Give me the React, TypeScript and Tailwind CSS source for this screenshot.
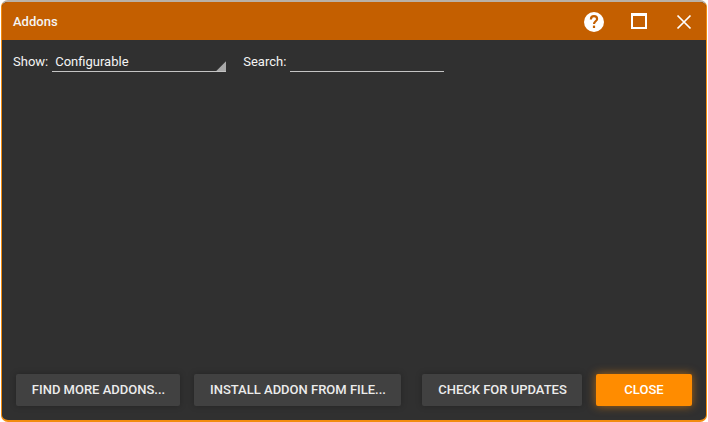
import React from "react";

function FooterButton({ label, width }: { label: string; width: string }) {
  return (
    <button
      className={`h-8 rounded-[2px] bg-[#414141] pl-px text-[13px] font-medium text-[#ececec] shadow-[0_0_6px_rgba(0,0,0,0.25)] ${width}`}
    >
      {label}
    </button>
  );
}

export default function App() {
  return (
    <div className="h-[422px] w-[708px] bg-white px-px font-['Roboto',sans-serif]">
      <div className="flex h-full w-full flex-col overflow-hidden rounded-[7px] border border-b-2 border-t-2 border-[#f28c0f] border-t-[#b9b0a6] bg-[#303030]">
        {/* Title bar */}
        <div className="flex h-[38px] shrink-0 items-center bg-[#c45f00] pl-[11px] text-white">
          <span className="mt-px text-[13px] font-medium text-[#f4f4f4]">Addons</span>
          <div className="ml-auto flex items-center">
            <svg width="22" height="22" viewBox="0 0 22 22" className="mr-[26px] mt-[2px]">
              <circle cx="11" cy="11" r="10" fill="#fff" />
              <path
                d="M7.9 8.4c0-2 1.2-3.2 3.1-3.2s3.1 1.1 3.1 2.7c0 2.3-3.1 2.4-3.1 5"
                fill="none"
                stroke="#c45f00"
                strokeWidth="2.2"
              />
              <rect x="9.9" y="14.6" width="2.2" height="2.4" fill="#c45f00" />
            </svg>
            <div className="mr-[29px] h-4 w-4 border-2 border-t-[3px] border-white" />
            <svg width="16" height="16" viewBox="0 0 16 16" className="mr-[14px] mt-px">
              <path d="M1.5 1.5l13 13M14.5 1.5l-13 13" stroke="#fff" strokeWidth="1.7" fill="none" />
            </svg>
          </div>
        </div>

        {/* Filters */}
        <div className="flex items-end pl-[11px] pt-[11px] text-[13px] leading-[20px] text-[#f4f4f4]">
          <span className="mr-[4px]">Show:</span>
          <div className="relative h-[21px] w-[174px] border-b border-[#c4c4c4] pl-[3px] pt-px">
            Configurable
            <div className="absolute bottom-0 right-0 h-[10px] w-[10px] bg-[#a8a8a8] [clip-path:polygon(100%_0,100%_100%,0_100%)]" />
          </div>
          <span className="ml-[17px] mr-[4px]">Search:</span>
          <div className="h-[21px] w-[154px] border-b border-[#c4c4c4]" />
        </div>

        {/* Footer */}
        <div className="mt-auto flex items-center pb-[14px] pl-[14px]">
          <FooterButton label="FIND MORE ADDONS..." width="w-[164px]" />
          <div className="w-[14px]" />
          <FooterButton label="INSTALL ADDON FROM FILE..." width="w-[207px]" />
          <div className="w-[21px]" />
          <FooterButton label="CHECK FOR UPDATES" width="w-[160px]" />
          <div className="w-[14px]" />
          <button className="h-8 w-[96px] rounded-[2px] bg-[#ff8c00] text-[13px] font-medium text-[#fff] shadow-[0_0_10px_rgba(255,140,0,0.6)]">
            CLOSE
          </button>
        </div>
      </div>
    </div>
  );
}
